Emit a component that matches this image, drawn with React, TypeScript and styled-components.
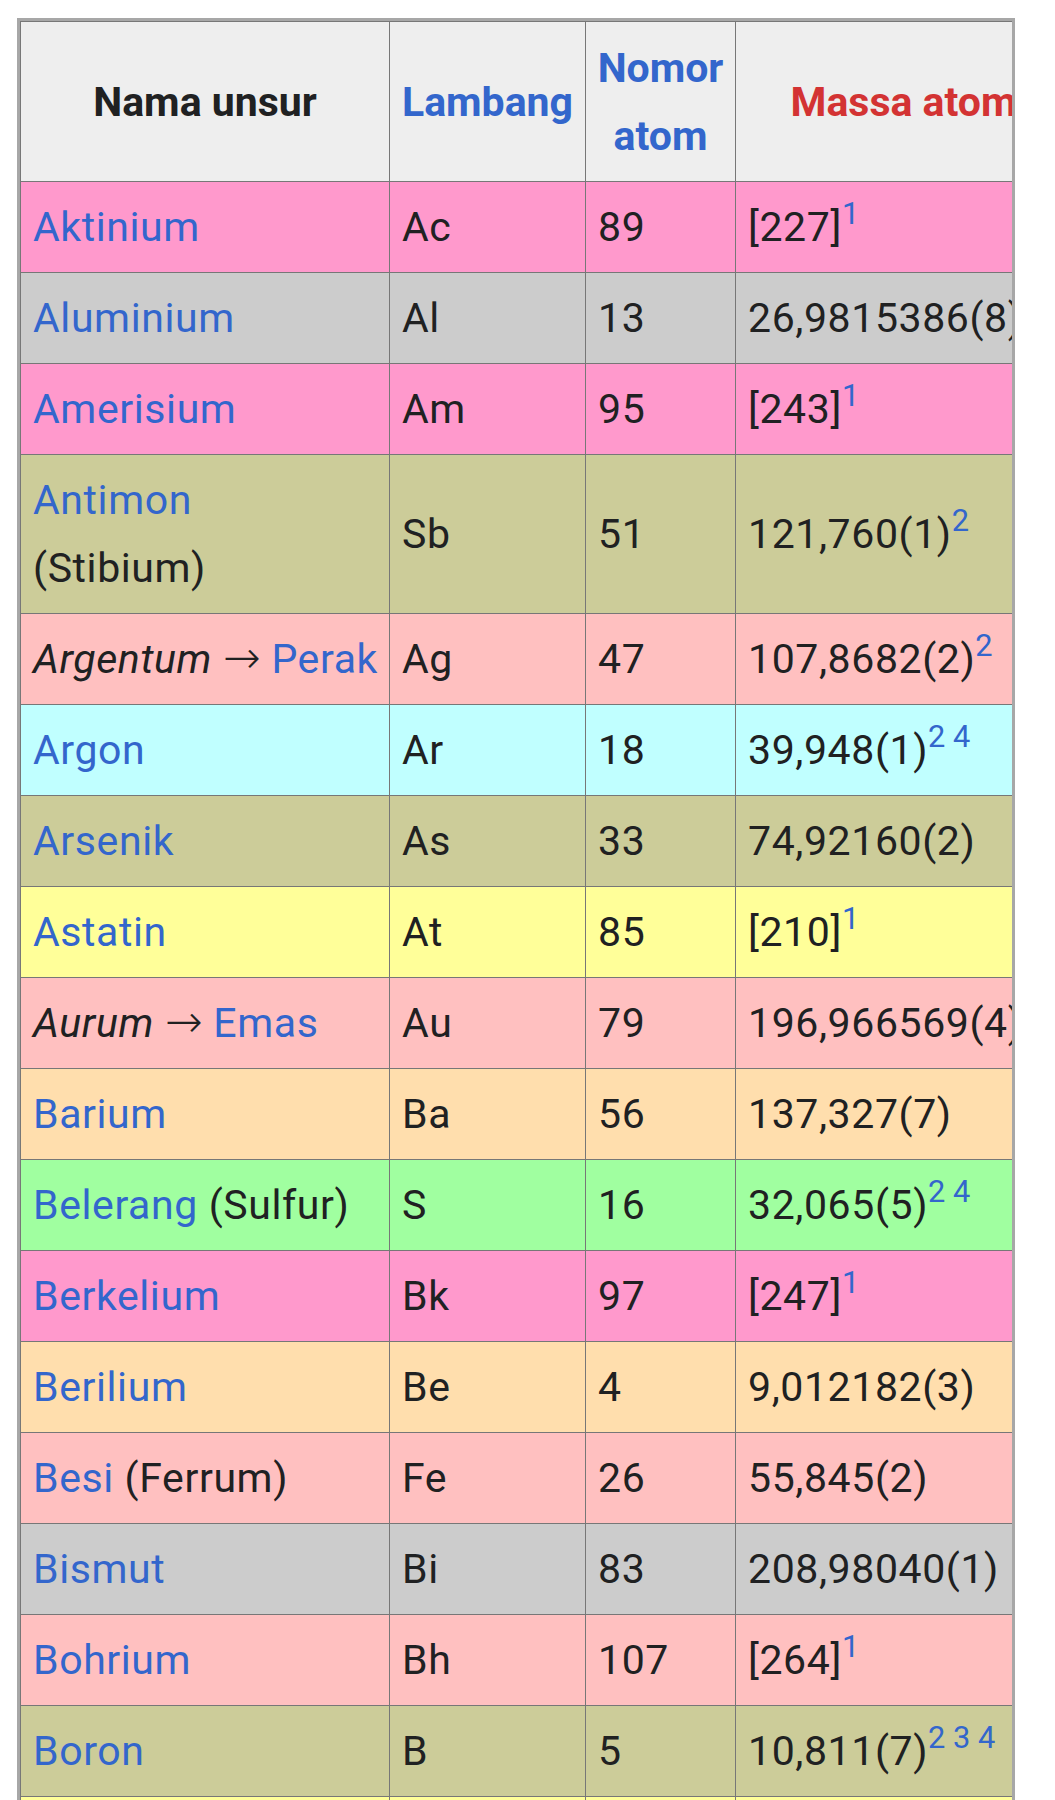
import React from "react";
import styled, { createGlobalStyle } from "styled-components";

const GlobalStyle = createGlobalStyle`
  body {
    margin: 0;
    background: #ffffff;
    font-family: Roboto, "Liberation Sans", Arial, sans-serif;
    color: #202122;
  }
`;

const colors = {
  actinide: "#ff99cc",
  poor: "#cccccc",
  metalloid: "#cccc99",
  transition: "#ffc0c0",
  noble: "#c0ffff",
  halogen: "#ffff99",
  alkaline: "#ffdead",
  nonmetal: "#a0ffa0",
};

type Group = keyof typeof colors;

interface IElement {
  name: string;
  latin?: string;
  extra?: string;
  wrap?: boolean;
  symbol: string;
  number: number;
  mass: string;
  notes?: number[];
  group: Group;
}

const elements: IElement[] = [
  { name: "Aktinium", symbol: "Ac", number: 89, mass: "[227]", notes: [1], group: "actinide" },
  { name: "Aluminium", symbol: "Al", number: 13, mass: "26,9815386(8)", notes: [2], group: "poor" },
  { name: "Amerisium", symbol: "Am", number: 95, mass: "[243]", notes: [1], group: "actinide" },
  { name: "Antimon", extra: "(Stibium)", wrap: true, symbol: "Sb", number: 51, mass: "121,760(1)", notes: [2], group: "metalloid" },
  { name: "Perak", latin: "Argentum", symbol: "Ag", number: 47, mass: "107,8682(2)", notes: [2], group: "transition" },
  { name: "Argon", symbol: "Ar", number: 18, mass: "39,948(1)", notes: [2, 4], group: "noble" },
  { name: "Arsenik", symbol: "As", number: 33, mass: "74,92160(2)", group: "metalloid" },
  { name: "Astatin", symbol: "At", number: 85, mass: "[210]", notes: [1], group: "halogen" },
  { name: "Emas", latin: "Aurum", symbol: "Au", number: 79, mass: "196,966569(4)", group: "transition" },
  { name: "Barium", symbol: "Ba", number: 56, mass: "137,327(7)", group: "alkaline" },
  { name: "Belerang", extra: "(Sulfur)", symbol: "S", number: 16, mass: "32,065(5)", notes: [2, 4], group: "nonmetal" },
  { name: "Berkelium", symbol: "Bk", number: 97, mass: "[247]", notes: [1], group: "actinide" },
  { name: "Berilium", symbol: "Be", number: 4, mass: "9,012182(3)", group: "alkaline" },
  { name: "Besi", extra: "(Ferrum)", symbol: "Fe", number: 26, mass: "55,845(2)", group: "transition" },
  { name: "Bismut", symbol: "Bi", number: 83, mass: "208,98040(1)", group: "poor" },
  { name: "Bohrium", symbol: "Bh", number: 107, mass: "[264]", notes: [1], group: "transition" },
  { name: "Boron", symbol: "B", number: 5, mass: "10,811(7)", notes: [2, 3, 4], group: "metalloid" },
  { name: "Brom", symbol: "Br", number: 35, mass: "79,904(1)", group: "halogen" },
];

const Frame = styled.div`
  margin: 18px 0 0 17px;
  width: 992px;
  border: 3px solid #a7a7a7;
  border-bottom: none;
  overflow: hidden;
`;

const Table = styled.table`
  border-collapse: collapse;
  table-layout: fixed;
  width: 1051px;
  font-size: 41px;
  letter-spacing: 0.6px;
  line-height: 68px;
`;

const Col = styled.col<{ $w: number }>`
  width: ${(p) => p.$w}px;
`;

const HeadCell = styled.th`
  background: #eeeeee;
  border: 1px solid #777777;
  padding: 12px 8px 11px;
  font-weight: 700;
  letter-spacing: 0;
  text-align: center;
  vertical-align: middle;
  white-space: nowrap;
  color: #202122;
`;

const Row = styled.tr<{ $bg: string }>`
  background: ${(p) => p.$bg};
`;

const Cell = styled.td`
  border: 1px solid #777777;
  padding: 11px 12px;
  text-align: left;
  vertical-align: middle;
  white-space: nowrap;
  overflow: hidden;
`;

const Link = styled.a<{ $red?: boolean }>`
  color: ${(p) => (p.$red ? "#d33333" : "#3366cc")};
  text-decoration: none;
`;

const Latin = styled.i`
  font-style: italic;
`;

const Arrow = styled.span`
  font-family: "DejaVu Sans", sans-serif;
  font-size: 110%;
  font-weight: 200;
  line-height: 1;
  letter-spacing: 0;
`;

const Note = styled.sup`
  font-size: 75%;
  line-height: 1;
  vertical-align: 17px;
  letter-spacing: 0;
`;

const NameCell = ({ el }: { el: IElement }) => (
  <Cell>
    {el.latin && (
      <>
        <Latin>{el.latin}</Latin> <Arrow>→</Arrow>{" "}
      </>
    )}
    <Link href="#">{el.name}</Link>
    {el.extra && (
      <>
        {el.wrap ? <br /> : " "}
        {el.extra}
      </>
    )}
  </Cell>
);

const App = () => {
  return (
    <>
      <GlobalStyle />
      <Frame>
        <Table>
          <colgroup>
            <Col $w={369} />
            <Col $w={196} />
            <Col $w={150} />
            <Col $w={336} />
          </colgroup>
          <thead>
            <tr>
              <HeadCell>Nama unsur</HeadCell>
              <HeadCell>
                <Link href="#">Lambang</Link>
              </HeadCell>
              <HeadCell>
                <Link href="#">
                  Nomor
                  <br />
                  atom
                </Link>
              </HeadCell>
              <HeadCell>
                <Link href="#" $red>
                  Massa atom
                </Link>
              </HeadCell>
            </tr>
          </thead>
          <tbody>
            {elements.map((el) => (
              <Row key={el.symbol} $bg={colors[el.group]}>
                <NameCell el={el} />
                <Cell>{el.symbol}</Cell>
                <Cell>{el.number}</Cell>
                <Cell>
                  {el.mass}
                  {el.notes && (
                    <Note>
                      {el.notes.map((n, i) => (
                        <React.Fragment key={n}>
                          {i > 0 && " "}
                          <Link href="#">{n}</Link>
                        </React.Fragment>
                      ))}
                    </Note>
                  )}
                </Cell>
              </Row>
            ))}
          </tbody>
        </Table>
      </Frame>
    </>
  );
};

export default App;
